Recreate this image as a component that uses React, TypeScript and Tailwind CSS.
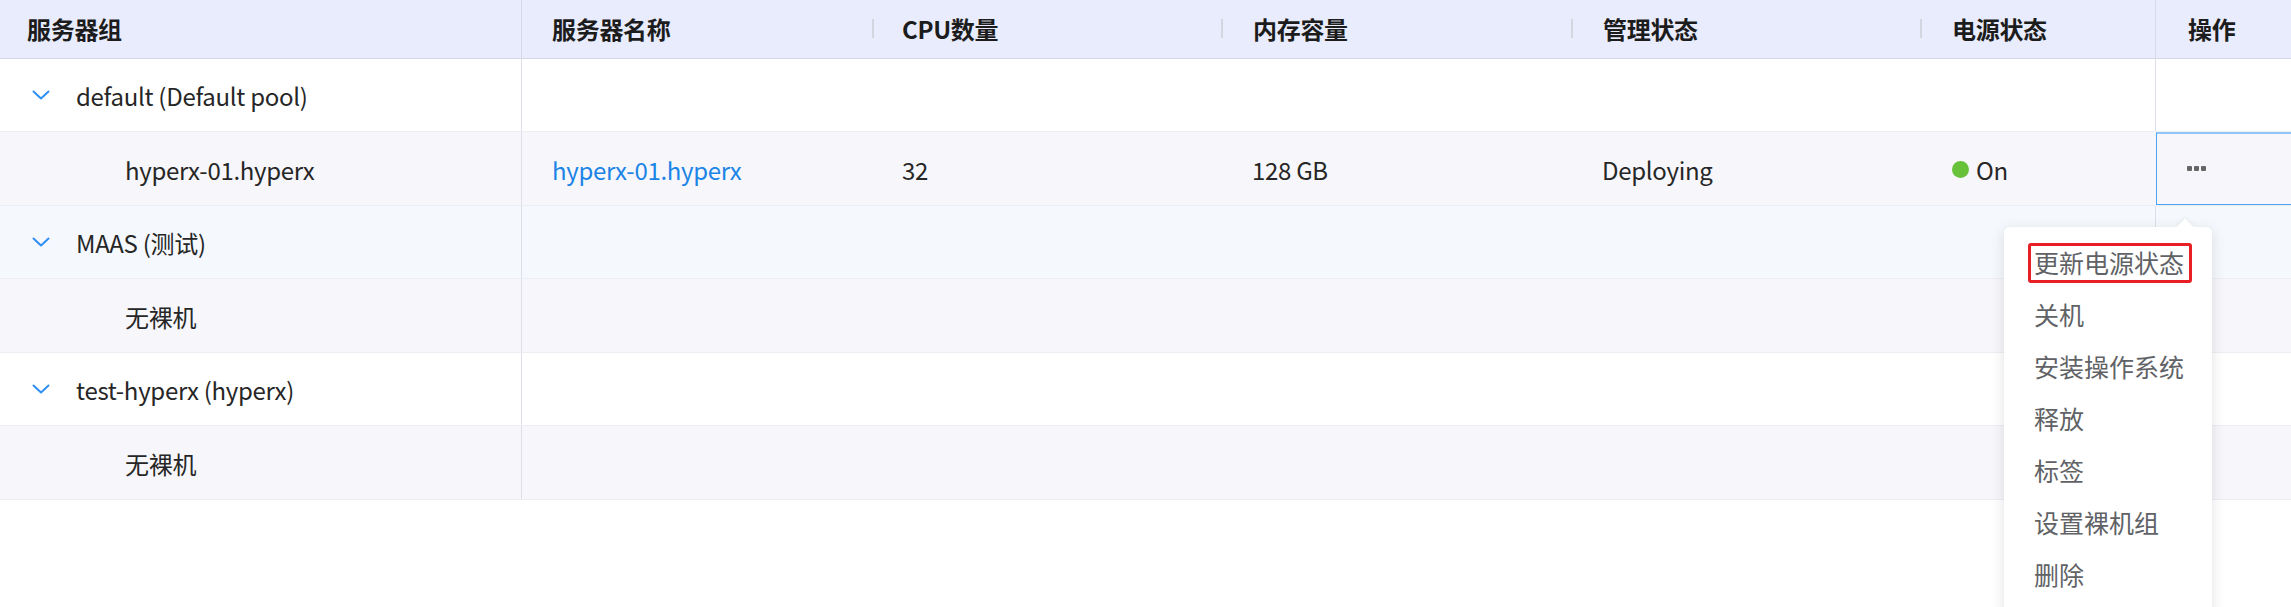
import React from "react";

const COLS = ["w-[522px]", "w-[350px]", "w-[349px]", "w-[350px]", "w-[349px]", "w-[236px]"];

const MENU_ITEMS = ["更新电源状态", "关机", "安装操作系统", "释放", "标签", "设置裸机组", "删除"];

function Chevron() {
  return (
    <svg width="18" height="10" viewBox="0 0 18 10" fill="none">
      <polyline points="1.5,1.5 9,8.5 16.5,1.5" stroke="#2f8ff2" strokeWidth="2" strokeLinecap="round" strokeLinejoin="round" />
    </svg>
  );
}

function HeaderDivider() {
  return <span className="h-[19px] w-[2px] shrink-0 bg-[#d3d6de]" />;
}

function GroupRow({ label, bg }: { label: string; bg: string }) {
  return (
    <div className={`flex h-[73.5px] border-b border-[#eceef4] ${bg}`}>
      <div className="flex w-[522px] items-center border-r border-[#dcdfe7] pl-[32px]">
        <Chevron />
        <span className="ml-[26px] pt-[3px]">{label}</span>
      </div>
      <div className="w-[1398px]" />
      <div className="w-[236px] border-r border-[#dcdfe7]" />
      <div className="flex-1" />
    </div>
  );
}

function EmptyChildRow() {
  return (
    <div className="flex h-[73.5px] border-b border-[#eceef4] bg-[#f7f7fb]">
      <div className="flex w-[522px] items-center border-r border-[#dcdfe7] pl-[125px] pt-[4px]">无裸机</div>
      <div className="w-[1398px]" />
      <div className="w-[236px] border-r border-[#dcdfe7]" />
      <div className="flex-1" />
    </div>
  );
}

export default function App() {
  return (
    <div className="relative h-[607px] w-[2291px] overflow-hidden bg-white font-['Noto_Sans_CJK_SC','Noto_Sans',sans-serif] text-[24px] tracking-[-0.3px] text-[#262626]">
      {/* header */}
      <div className="flex h-[58.5px] border-b border-[#d3d7e6] bg-[#e8ecfc] font-bold text-[#1c1c1c]">
        <div className={`${COLS[0]} flex items-center border-r border-[#d6dae7] pl-[27px]`}>服务器组</div>
        <div className={`${COLS[1]} flex items-center pl-[30px]`}>服务器名称</div>
        <div className={`${COLS[2]} flex items-center`}>
          <HeaderDivider />
          <span className="pl-[28px]">CPU数量</span>
        </div>
        <div className={`${COLS[3]} flex items-center`}>
          <HeaderDivider />
          <span className="pl-[30px]">内存容量</span>
        </div>
        <div className={`${COLS[4]} flex items-center`}>
          <HeaderDivider />
          <span className="pl-[30px]">管理状态</span>
        </div>
        <div className={`${COLS[5]} flex items-center border-r border-[#d6dae7]`}>
          <HeaderDivider />
          <span className="pl-[30px]">电源状态</span>
        </div>
        <div className="flex flex-1 items-center pl-[32px]">操作</div>
      </div>

      <GroupRow label="default (Default pool)" bg="bg-white" />

      {/* server row */}
      <div className="flex h-[73.5px] border-b border-[#e9eef5] bg-[#f7f7fb]">
        <div className="flex w-[522px] items-center border-r border-[#dcdfe7] pl-[125px] pt-[4px]">hyperx-01.hyperx</div>
        <div className="flex w-[350px] items-center pl-[30px] pt-[4px] text-[#1b84e6]">hyperx-01.hyperx</div>
        <div className="flex w-[349px] items-center pl-[30px] pt-[4px]">32</div>
        <div className="flex w-[350px] items-center pl-[31px] pt-[4px]">128 GB</div>
        <div className="flex w-[349px] items-center pl-[31px] pt-[4px]">Deploying</div>
        <div className="flex w-[236px] items-center gap-[7px] pl-[32px] pt-[3px]">
          <span className="h-[17px] w-[17px] rounded-full bg-[#67c23a]" />
          <span>On</span>
        </div>
        <div className="flex flex-1 items-center border-t-2 border-l border-b border-t-[#8fc6fa] border-l-[#4fa3f5] border-b-[#4fa3f5] pl-[30px]">
          <div className="flex gap-[2px]">
            <span className="h-[5px] w-[5px] rounded-[1px] bg-[#666]" />
            <span className="h-[5px] w-[5px] rounded-[1px] bg-[#666]" />
            <span className="h-[5px] w-[5px] rounded-[1px] bg-[#666]" />
          </div>
        </div>
      </div>

      <GroupRow label="MAAS (测试)" bg="bg-[#f5f9fe]" />
      <EmptyChildRow />
      <GroupRow label="test-hyperx (hyperx)" bg="bg-white" />
      <EmptyChildRow />

      {/* dropdown menu */}
      <div className="absolute left-[2004px] top-[227px] w-[208px] rounded-[6px] bg-white pb-[20px] pt-[10px] text-[25px] tracking-normal text-[#606266] shadow-[0_3px_14px_rgba(0,0,0,0.12)]">
        <span className="absolute left-[175px] top-[-6px] h-[12px] w-[12px] rotate-45 bg-white shadow-[-2px_-2px_4px_rgba(0,0,0,0.04)]" />
        {MENU_ITEMS.map((item, i) => (
          <div key={item} className="relative flex h-[52px] items-center pl-[30px]">
            {i === 0 ? (
              <span className="-ml-[6px] flex h-[40px] w-[164px] items-center rounded-[3px] border-[3px] border-[#e81f27] pl-[3px]">
                {item}
              </span>
            ) : (
              item
            )}
          </div>
        ))}
      </div>
    </div>
  );
}
